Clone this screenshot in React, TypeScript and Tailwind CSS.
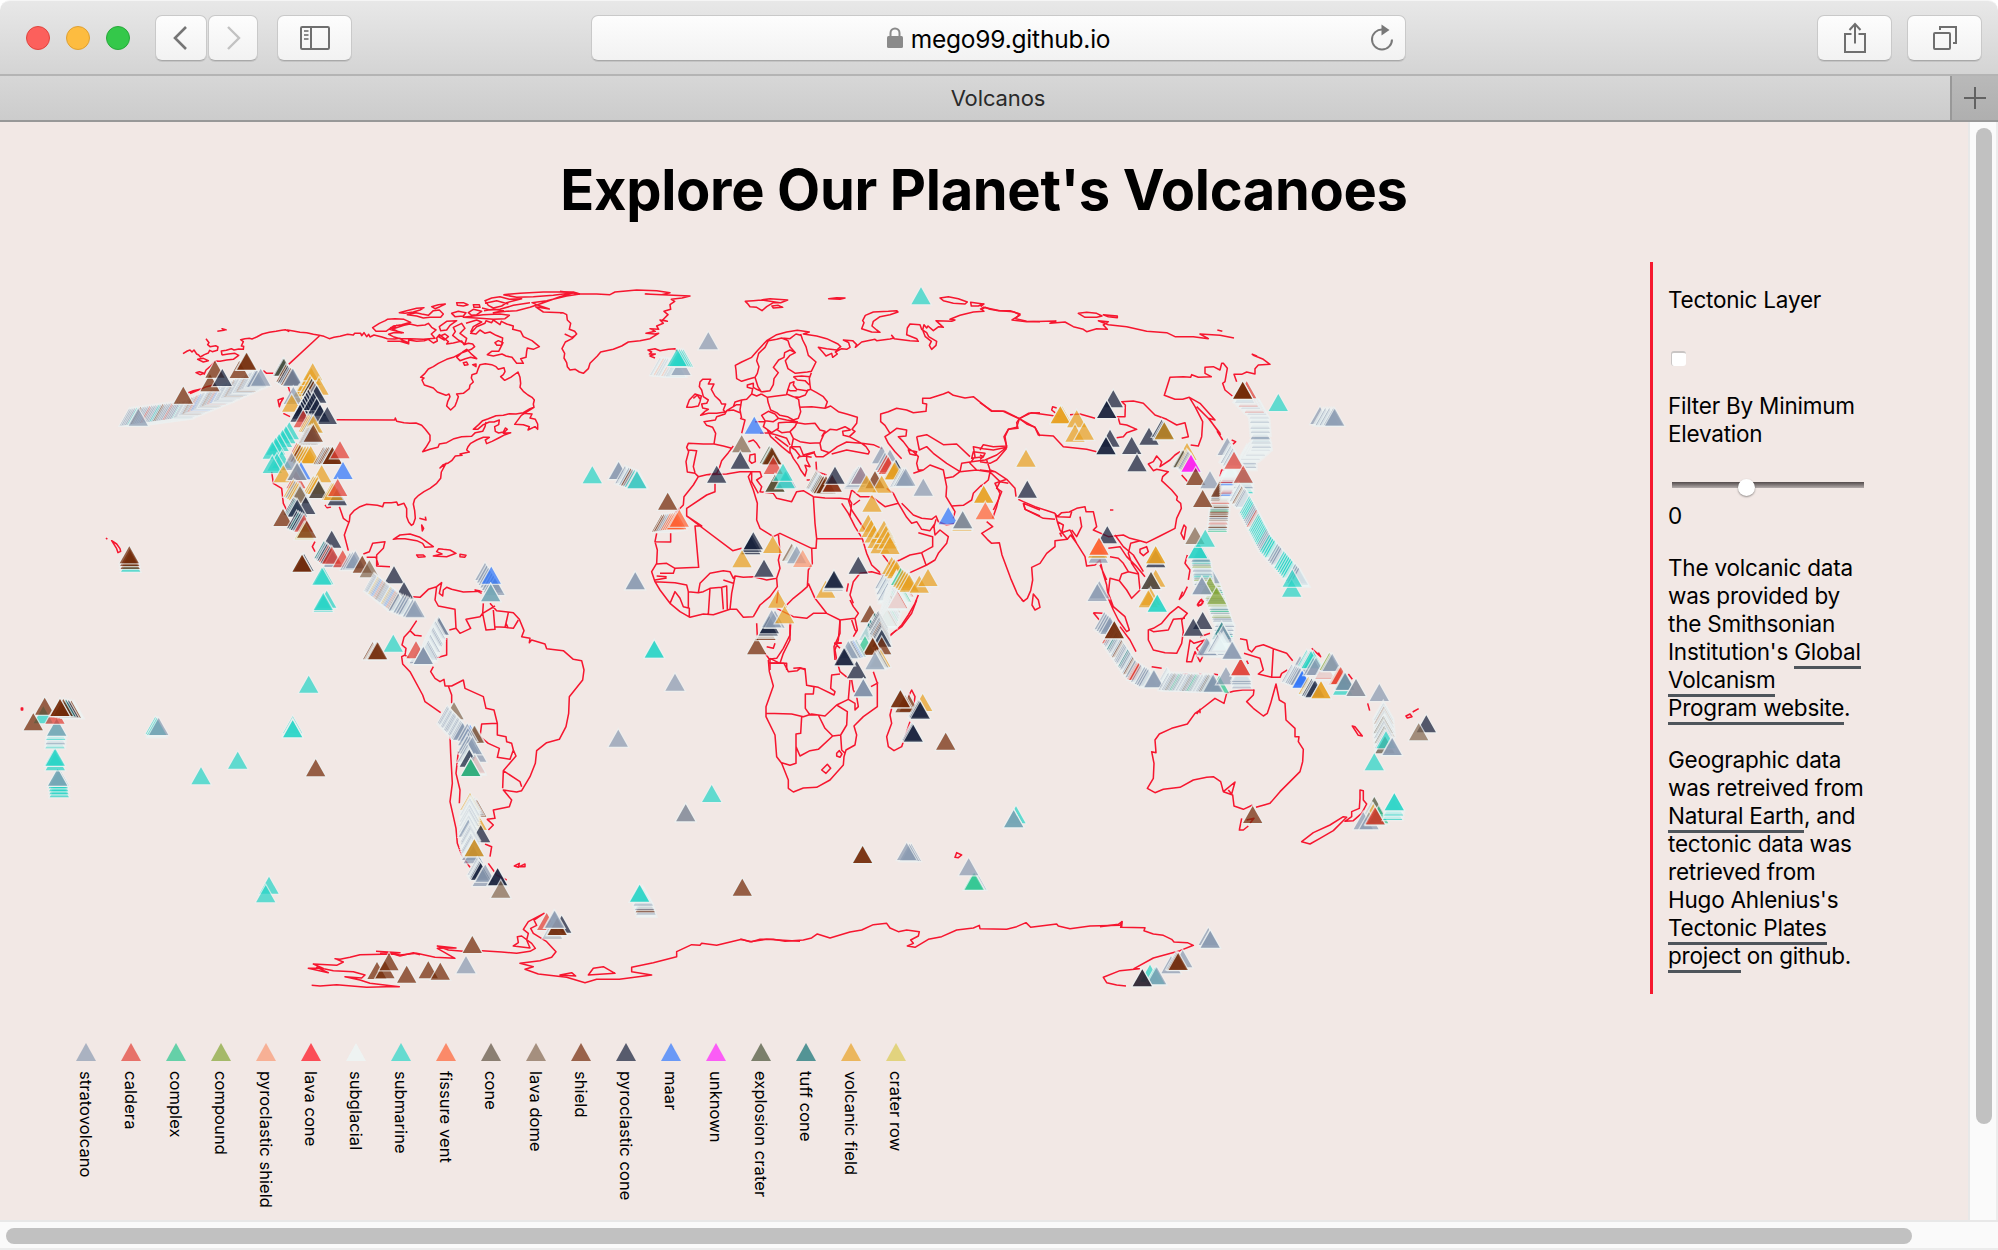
import React from 'react';

const KINDS: Record<string, { name: string; color: string }> = {
  s: { name: 'stratovolcano', color: '#8b9bb2' },
  c: { name: 'caldera', color: '#e23f35' },
  x: { name: 'complex', color: '#2ac68f' },
  d: { name: 'compound', color: '#84a535' },
  h: { name: 'pyroclastic shield', color: '#f99973' },
  l: { name: 'lava cone', color: '#ff0c1a' },
  g: { name: 'subglacial', color: '#ecf8f8' },
  u: { name: 'submarine', color: '#29d5c7' },
  f: { name: 'fissure vent', color: '#ff6335' },
  n: { name: 'cone', color: '#5f5241' },
  o: { name: 'lava dome', color: '#846952' },
  b: { name: 'shield', color: '#732a08' },
  p: { name: 'pyroclastic cone', color: '#16203b' },
  m: { name: 'maar', color: '#3077fd' },
  k: { name: 'unknown', color: '#ff21fd' },
  e: { name: 'explosion crater', color: '#495238' },
  t: { name: 'tuff cone', color: '#107074' },
  v: { name: 'volcanic field', color: '#e8a123' },
  r: { name: 'crater row', color: '#dbca53' },
};

/** [kinds, x, y] is one spot; [kinds, x1, y1, x2, y2, count] is a chain that cycles through the kinds. */
type Row = [string, number, number, number?, number?, number?];
type Region = { x: number; y: number; land: string; rows: Row[] };

const REGIONS: Region[] = [
  {
    // North America
    x: 100,
    y: 270,
    land: `M249 251L262 243 270 240 276 246 282 240 290 252 296 255 301 261 313 254 325 249 329 241 337 245 352 241 354 231 347 227 330 230 323 224 327 218 318 206
M366 255L364 243 379 241 394 236 402 240 416 237 430 238 431 229 424 228 430 215 422 209 435 206 448 205 456 207 470 201 487 192 508 187 528 184 545 181 556 179 566 184 562 180 580 183 600 187 620 188 640 193 658 196 672 199 688 206 702 202 720 199 743 193 760 195 764 190 782 190 785 197 792 188 800 200 806 193 810 201 822 195 846 201 862 206 884 207 900 205 905 210 926 218 926 210 950 214 973 212 985 208 1000 219 1012 213 1010 204 1018 194 1030 203 1045 215 1040 222 1060 219 1085 213 1092 224 1105 220 1118 222 1124 230 1114 238 1100 243 1082 250 1060 262 1040 268 1015 280 1000 290 985 297 975 310 962 322 972 324 966 330 973 345 1000 354 1012 366 1038 376 1047 372 1050 380 1043 395 1040 408 1052 420 1065 408 1070 395 1075 380 1070 372 1090 370 1108 356 1110 345 1120 336 1114 324 1116 314 1130 310 1135 295 1140 284 1156 281 1175 284 1188 290 1195 298 1212 293 1215 305 1210 314 1202 320 1214 331 1232 322 1254 306 1260 322 1262 340 1260 352 1270 364 1284 375 1296 382 1303 390 1300 402 1302 412 1290 416 1270 428 1248 432 1228 431 1210 436 1188 437 1165 446 1148 452 1136 464 1120 478 1133 478 1150 464 1168 456 1182 456 1198 450 1196 464 1184 470 1186 484 1196 489 1210 486 1216 474 1222 478 1210 490 1232 488 1215 494 1196 504 1176 514 1160 521 1156 510 1168 502 1150 502 1130 510 1112 520 1104 530 1100 540 1108 546 1080 552 1086 556 1066 558 1055 572 1043 580 1030 584 1020 594 1038 580 1024 606 1022 625 1010 640 990 655 972 665 956 676 944 688 940 702 944 722 946 745 940 762 934 766 926 756 920 740 920 716 912 700 894 706 890 696 874 698 852 698 848 710 832 706 800 703 780 710 762 722 750 736 748 754 740 775 733 795 738 815 745 842
M658 198L566 283M490 302L500 310 520 310M288 308L298 305 312 310 300 314ZM312 314L318 300 330 290 346 273 360 274 380 270 400 268 416 256 405 250 385 252 366 255M293 268L310 265 325 272 310 276ZM265 368L280 362 300 358 272 370 320 350 340 345M352 184L372 181 366 176 380 180
M710 449L884 450 886 444 890 454 912 458 930 460 948 459 965 466 976 478 990 496 990 512 978 532 968 545 990 538 1014 532 1018 522 1040 518 1062 506 1085 500 1115 499 1126 488 1148 484 1155 470 1158 456
M1302 412L1264 436 1244 463 1270 464 1288 470 1284 480 1305 470 1313 478 1313 462 1306 448 1290 444 1296 432 1270 430
M818 173L838 160 856 152 862 148 885 146 912 148 932 157 905 164 880 168 858 184 828 184Z
M868 178L890 166 880 176 912 166 930 162 952 167 975 165 985 160 995 172 1008 180 994 192 1005 205 970 208 930 206 900 206 880 200 866 193 880 188 910 188 885 182ZM870 172L905 190M862 214L900 214 928 222
M898 128L920 122 950 115 972 113 960 120 940 126 915 130ZM922 134L948 128 965 132 985 136 1000 122 1018 120 1030 132 1022 142 990 142 970 144 950 138ZM995 110L1015 104 1036 102 1020 110 1005 116ZM1070 98L1090 98 1104 104 1090 108 1072 106ZM1055 130L1075 124 1098 128 1090 138 1065 140ZM1105 128L1120 118 1145 124 1130 134 1115 136ZM1120 104L1138 104 1140 112 1122 112Z
M1090 142L1120 138 1150 134 1200 132 1228 136 1215 146 1180 148 1140 145Z
M1155 92L1175 84 1200 80 1228 88 1265 86 1220 98 1205 108 1180 114 1165 106ZM1155 100L1190 92 1225 102M1152 122L1180 118 1210 122 1180 128 1220 124 1250 122 1290 112 1330 98 1380 80 1420 68M1210 74L1260 70 1330 66 1420 66 1440 72M1210 74L1250 82 1300 80 1360 76 1420 68M1146 114L1170 120 1200 118 1240 106 1290 98
M1112 190L1130 170 1155 160 1158 152 1175 158 1180 150 1200 164 1204 154 1220 162 1240 168 1238 178 1262 184 1270 200 1296 212 1318 230 1300 238 1282 234 1280 244 1278 262 1262 266 1270 280 1250 280 1236 262 1218 258 1206 252 1180 258 1162 254 1175 244 1196 244 1205 226 1208 204 1188 196 1170 186 1155 190 1140 180 1128 192Z
M1070 262L1088 246 1100 238 1112 250 1130 266 1112 262 1096 266 1080 272ZM1090 278L1100 276 1104 284 1094 286ZM1118 284l10-2 0 8zM1185 218l10-6 14 6-4 8-14 0zM1018 170L1040 154 1070 152 1050 166 1040 180 1022 182ZM1060 172L1085 160 1095 175 1080 190 1100 205 1095 222 1075 210 1058 196 1066 185ZM1098 160L1130 150 1145 156 1120 170 1112 186M1015 200l20-8 10 8-12 10z
M1306 110L1348 117 1310 104 1296 98 1340 92 1400 78 1440 72M1306 110L1330 126 1388 128
M880 808L900 795 930 792 960 802 975 812 1000 830 975 832 968 820 950 812 915 806 892 806ZM1010 845L1016 836 1030 838 1050 840 1068 850 1040 860 1000 858 1026 852ZM950 855l20 0 5 5-20 2zM1080 853l18 3-4 6-14-2zM958 745l20 5-2-10M965 765l6 10-4 8zM790 852L808 845 818 820 855 815 850 835 830 855 830 888 870 890M800 862L828 862 835 885M515 605L520 640 545 655 550 700 560 720M645 815l-8 15 8 15M718 710L730 745 745 756M675 705l6 8 12-2M35 812l15 10 10 14 2 8-8 4-4-12zM18 804l4 4M534 390l16-6-8 14-4 12zM550 430l20 10M565 350l6 20`,
    rows: [
      ['ssssusbssssc', 88, 467, 250, 445, 30],
      ['ssgssbsscsm', 250, 443, 370, 395, 24],
      ['sssgssb', 370, 395, 470, 350, 20],
      ['s', 115, 467], ['b', 250, 401], ['b', 330, 364], ['b', 345, 323], ['p', 367, 348], ['b', 418, 324], ['b', 438, 299, 440, 299, 2], ['s', 482, 347],
      ['p', 549, 317], ['e', 552, 317], ['bpsb', 558, 335, 572, 345, 4], ['ps', 577, 347, 579, 347, 2],
      ['v', 598, 397, 634, 345, 4], ['v', 638, 331], ['v', 657, 374], ['vpbsp', 630, 370, 650, 398, 5], ['s', 580, 402], ['v', 575, 425], ['ppp', 625, 410, 600, 455, 6], ['p', 640, 420, 660, 455, 3],
      ['p', 682, 462], ['c', 610, 472], ['vvs', 625, 485, 640, 488, 4], ['sbs', 620, 525, 640, 515, 5], ['u', 568, 508, 517, 566, 6], ['u', 545, 595, 517, 609, 3],
      ['cvb', 590, 570, 600, 575, 3], ['v', 607, 580, 632, 580, 4], ['bsb', 670, 583, 697, 582, 6], ['b', 697, 582], ['c', 720, 565], ['s', 575, 600], ['v', 550, 637], ['m', 603, 628], ['c', 588, 655], ['os', 590, 630, 592, 630, 2],
      ['v', 665, 637], ['m', 729, 627], ['v', 640, 670, 652, 672, 3], ['pn', 655, 684, 656, 684, 2], ['v', 695, 690], ['p', 712, 706], ['v', 700, 690], ['c', 713, 678], ['vsv', 580, 680, 600, 694, 5], ['o', 600, 700],
      ['p', 617, 732], ['pts', 580, 735, 592, 740, 4], ['b', 549, 768], ['ptpsc', 590, 775, 612, 785, 5], ['r', 613, 808], ['b', 620, 803],
      ['p', 695, 833], ['tspcp', 672, 865, 690, 880, 5], ['s', 700, 891], ['c', 695, 881], ['c', 728, 892], ['s', 750, 900, 766, 895, 3], ['b', 787, 908], ['o', 808, 922], ['p', 612, 903], ['b', 607, 905, 606, 905, 2],
      ['u', 671, 943, 666, 944, 2], ['u', 680, 1013], ['u', 670, 1025], ['u', 670, 1020],
      ['p', 882, 940], ['p', 912, 988], ['sssgvssmsfsbs', 822, 962, 895, 1020, 26], ['sgss', 895, 1022, 945, 1042, 8],
      ['ubbb', 92, 905, 88, 880, 4], ['s', 1155, 930, 1185, 975, 7], ['m', 1174, 941], ['us', 1172, 994, 1172, 994, 2],
    ],
  },
  {
    // Greenland, Europe, northern Africa, Middle East
    x: 560,
    y: 270,
    land: `M0 64L60 72 110 72 150 74 165 66 230 60 290 62 330 68 305 74 256 72 340 76 390 78 366 84 334 88 344 94 330 104 332 118 312 124 324 134 308 150 322 154 300 150 310 160 290 168 296 178 270 176 286 184 258 190 284 192 296 190 270 206 240 212 205 216 185 228 160 238 122 246 112 258 90 280 85 296 70 310 58 306 46 298 30 300 22 290 20 278 12 264 14 250 6 236 16 216 36 206 50 192 44 184 28 178 32 160 22 150 20 134 8 128 0 128M14 192L36 202 46 196
M556 94L580 92 604 90 630 86 683 90 662 98 640 98 620 110 606 122 590 112 570 110 562 100ZM604 90L660 98M636 108L655 106 668 112 640 114ZM806 86L830 83 855 84 840 88Z
M905 176L912 158 908 152 916 136 940 126 985 124 1010 122 1014 126 990 134 960 140 940 154 936 168 950 180 960 187 935 186Z
M1140 84L1165 80 1195 86 1222 96 1215 102 1180 100 1150 92ZM1232 97L1270 102 1255 108 1234 108Z
M350 244L345 236 325 238 300 242 285 236 264 240 275 246 268 252 286 252 270 258 285 264
M604 366L594 350 585 322 564 328 545 334 530 326 528 300 526 286 545 276 575 262 594 240 620 212 650 194 680 186 712 181 748 186 730 192 745 194 770 198 800 206 834 222 842 230 830 240 800 236 775 232 788 246 798 258 815 250 818 262 832 252 826 246 845 236 860 238 870 232 866 218 850 210 878 212 890 224 886 232 905 216 945 208 950 212 990 207 1002 204 995 196 1002 206 1050 212 1075 214 1070 206 1040 194 1042 174 1050 162 1080 164 1085 178 1100 188 1106 200 1130 214 1128 226 1115 238 1108 226 1114 214 1096 200 1088 180 1092 164 1100 174 1104 168 1120 182 1136 170 1150 172 1128 152 1175 154 1185 150 1170 148 1200 136 1240 126 1272 124 1265 118 1275 112 1290 118 1315 122 1350 122 1380 132 1366 146 1400 154 1440 155
M604 366L630 362 640 344 642 326 655 308 640 292 656 270 672 262 674 248 690 240 706 248 690 256 676 272 684 296 706 310 742 306 754 304 768 276 745 256 738 230 728 210 722 192M706 248L690 230 684 212 665 204 650 208 625 212 615 232 596 250 590 272 597 290 592 310 585 322M665 204L690 206 708 192 722 196
M754 308L748 325 750 345 752 358 740 362 710 358 700 345 702 335 690 340 684 358 690 362 710 362M700 320L725 318 750 320M700 320L712 330 735 332 748 345M684 358L680 372 700 380 718 382 736 375 745 358
M604 372L622 382 650 378 680 374M700 380L716 388 718 405 722 425 715 445 700 450 682 440 660 436 650 428 632 420 624 396 622 382M718 412L755 410 795 415 802 395 790 380 770 368 752 358M604 372L590 378 575 372 578 356 562 352 562 345 580 340 580 352 590 358 600 362
M795 415L812 408 835 425 860 432 892 442 890 460 876 478 885 484 868 500 850 496 848 484 872 480M872 480L855 470 830 480 810 478 792 492 786 505 780 520 784 540 808 548 832 530 860 516 885 518 905 520M808 548L790 560 768 560 762 548 740 555 740 570 750 590 735 586 740 600 735 618 722 600 715 586 700 565 690 545 690 530
M815 552L860 540 925 552 928 545 918 530 905 520 940 524 966 536M868 500L905 520
M575 372L560 388 545 390 525 396 520 410 500 422 495 432 470 440 466 450 432 455 440 466 458 472 467 490 462 522 430 522 385 520 380 532 386 545 378 575 382 606 405 610 415 620 440 614 470 610 478 594 485 572 505 548 520 528M462 522L490 528 515 535M385 540L410 542 404 570 400 590 405 608
M545 390L540 420 545 445M500 422L520 420 540 428M520 410L530 404 545 404M540 445L555 450 550 470 545 490M605 436L625 424 645 432 655 445 640 455 615 452ZM585 455L615 455 610 470 635 488 655 475 655 458M655 445L680 450 712 455 705 470 690 485 665 488 650 478M655 458L690 456 712 458 735 462 765 460 780 480 795 484 785 500M690 485L700 505 720 515 750 520 780 518M700 505L695 530 720 530 730 555 765 545M600 490L635 488M690 530L706 540 720 558 712 566
M565 515L580 510 590 520 600 535M622 480L632 500 650 516 665 530 690 550M630 490L650 495 680 505 690 525M645 500L665 515 685 530M570 555L585 552 586 575 575 580 568 572ZM715 560L735 558 755 562
M420 336L428 328 452 328 445 342 462 342 454 358 465 378 480 392 485 402 497 402 490 420 496 426 470 430 445 430 422 436 435 424 445 418 428 414 425 402 440 400 445 390 430 380 425 360 418 350ZM380 412L388 390 405 372 424 378 420 395 415 408 395 412ZM400 385l12-10 8 12
M1025 566L1005 545 985 520 975 500 990 490 975 466 962 455 962 432 985 425 1010 415 1040 420 1060 428 1098 424 1100 402 1088 400 1088 385 1110 385 1150 372 1165 366 1180 376 1215 384 1240 380 1265 400 1295 424 1330 424 1355 436 1378 446 1405 430 1440 428M1378 446L1370 458 1374 475 1345 478 1335 500 1340 532 1300 540 1270 536 1240 530 1245 560 1230 580 1250 600M1378 446L1400 462 1425 472 1440 498
M990 490L1010 475 1040 480 1038 498 1015 500 1030 515 1045 535 1060 545 1075 560 1070 580 1075 600 1090 600 1110 585 1150 600 1155 625 1160 650 1158 680 1175 708M1045 540L1070 545 1066 556 1050 552Z
M1070 500L1100 494 1130 512 1150 524 1190 522 1230 560M1070 500L1078 540 1100 530 1120 550 1160 580 1200 605 1250 600 1290 606 1320 635 1345 640M1240 545L1275 550 1270 560 1235 565ZM1200 605L1205 580 1235 575 1275 570 1310 555 1340 532
M1155 625L1180 620 1200 605M1175 708L1210 706 1235 690 1240 670 1265 645M1290 606L1285 630 1262 650M1320 635L1310 655 1325 665 1315 690 1300 720M1390 700L1440 720M1390 700L1396 718 1440 738
M1025 700L1040 715 1060 735 1085 745 1115 748 1128 738 1135 755 1160 765 1185 760M1175 708L1185 725 1180 745M1128 748L1122 770 1125 795 1140 780 1165 800 1160 820 1135 850 1125 870 1100 885 1050 908 1015 925M1015 700L1040 742 1055 760 1070 755 1085 778 1110 782 1125 760M1075 788L1118 800 1118 830 1085 848 1050 855 1020 870 995 880M1085 848L1098 885M865 690L875 720 905 765 915 780M995 890L965 850
M845 700L865 730 885 770 907 806 920 850 935 885 960 908M905 806L770 806 768 835 755 835 757 880 745 900 742 950 725 965 700 985 680 1005M760 680L765 760 770 806M755 835L660 790 640 800 600 775 590 750 592 700 580 660 572 640 565 620 575 605M1075 975L1065 1000 1045 1035 1025 1065 990 1098
M415 620L400 645 372 680 370 705 345 730M440 614L500 612 540 605 600 605 605 620 590 630 605 650 600 665 640 670 650 685 695 695 710 665 730 662 760 680 795 684 840 685 868 688 875 660M575 605L575 635 595 670
M465 640L465 665 440 675 380 715 380 738 518 842 545 835M380 738L425 768 405 768 416 892 345 895 320 880 290 882M283 815L332 816 332 790M290 790L285 815 292 840 290 880 275 905 285 935 300 960 330 1000 360 1025 390 1042 430 1032 460 1034 510 1018 530 1018 550 1042 580 1040M590 1060L592 1100M615 1150L630 1170 630 1200
M285 935L345 938 380 945 385 965 415 968 420 940 450 910 490 902 510 905 520 925 525 918 550 922 580 920 620 930 650 925 660 895 655 870 660 850 655 790M345 895L340 910 300 910M290 918L320 920M285 930L320 924M330 1000L345 965 360 985 370 1010 388 1015 388 1042M385 965L385 1015M445 1032L450 955 485 952 490 1018M485 952L500 948 502 1018M510 1018L515 970 525 920M415 968L430 965 450 955M490 930L520 940M650 925L652 950 630 980 600 1005 580 1040M655 960L650 1000M650 1015L700 1040 740 1045 760 1030 800 1030 840 1050 885 1045M745 940L765 985 800 1030M680 1005L700 985M885 1045L892 1080 880 1100M840 1050L840 1090 822 1130 825 1170M822 1120L845 1120M865 940L860 965M870 990L880 1010 895 1030 885 1045M880 1000L870 975 880 935 900 910 935 905 970 915M690 1060L690 1110 670 1150 660 1180 630 1165M620 1130L640 1135 645 1120M630 1180L680 1180 680 1200M700 1195l20 -2 16 6
M868 688L875 700 870 740M875 660L900 680 935 680 975 710 1015 700 1000 670 980 655M900 690L880 705M768 575L770 605 800 615M740 630l10 0M1060 610L1090 600`,
    rows: [
      ['u', 1083, 103], ['s', 445, 238], ['sggfgsg', 300, 315, 350, 320, 16], ['s', 363, 315], ['uu', 370, 290, 351, 288, 4], ['u', 97, 640], ['s', 175, 627], ['s', 176, 627], ['sgsbsu', 195, 640, 235, 655, 8], ['su', 230, 655, 231, 655, 2],
      ['m', 583, 491], ['o', 545, 547], ['p', 541, 596], ['p', 470, 638], ['exb', 628, 580, 638, 584, 3], ['b', 635, 583], ['c', 640, 612], ['be', 645, 665, 645, 665, 2], ['s', 680, 653], ['u', 676, 655], ['u', 669, 632],
      ['osgsn', 768, 655, 785, 668, 6], ['b', 790, 670, 798, 670, 2], ['c', 815, 665], ['b', 817, 665], ['p', 825, 641], ['s', 882, 655, 896, 642, 4], ['cs', 902, 641, 902, 641, 2], ['s', 965, 580], ['s', 990, 590], ['scc', 975, 600, 985, 612, 3], ['p', 1008, 620], ['v', 998, 630, 1004, 628, 3], ['sgs', 1020, 650, 1037, 647, 4],
      ['b', 945, 655], ['v', 965, 668], ['v', 920, 667], ['s', 1090, 677], ['v', 936, 725], ['b', 323, 719], ['bbssffff', 305, 785, 350, 778, 8], ['f', 358, 770],
      ['v', 925, 785, 960, 850, 5], ['v', 972, 803, 990, 852, 4], ['sg', 975, 955, 985, 1000, 6], ['v', 995, 912, 1010, 925, 3], ['gsgsgxgsgbg', 1010, 955, 980, 1075, 34], ['gxgggcg', 1045, 955, 1010, 1020, 14], ['xvvvv', 1022, 945, 1048, 965, 5], ['v', 1078, 968], ['v', 1104, 948],
      ['p', 895, 911], ['v', 797, 983], ['pgpp', 820, 963, 822, 953, 4], ['p', 572, 853, 580, 838, 3], ['v', 638, 849], ['v', 546, 892], ['p', 612, 920], ['ogs', 695, 872, 710, 880, 3], ['h', 728, 891], ['s', 225, 958, 226, 958, 2],
      ['v', 653, 1013], ['b', 590, 1153], ['bgpp', 618, 1110, 628, 1090, 4], ['s', 645, 1073], ['s', 635, 1072], ['v', 674, 1060], ['u', 283, 1162], ['m', 1165, 763], ['v', 1206, 782], ['sn', 1206, 777, 1208, 775, 2], ['s', 1208, 775], ['v', 1271, 698, 1271, 698, 2], ['f', 1276, 748],
      ['b', 930, 1057], ['tgt', 945, 1080, 920, 1120, 5], ['ppgpsb', 955, 1075, 965, 1130, 10], ['x', 915, 1150], ['b', 965, 1153], ['b', 938, 1153, 938, 1155, 2], ['vsgs', 962, 1190, 945, 1198, 4], ['tgmspgsp', 888, 1160, 865, 1165, 7], ['p', 890, 1225], ['p', 855, 1186, 852, 1186, 2],
    ],
  },
  {
    // Asia
    x: 980,
    y: 270,
    land: `M20 755L38 770 5 790 22 808 35 820 58 818 66 855 92 925 112 972 130 994 142 985 152 962 158 930 155 892 180 880 200 850 225 830 225 812 262 808 272 795 290 820 315 860 320 888 345 885 360 870 368 905 380 945 385 985 400 1020 415 1050 440 1085 448 1080 435 1040 400 1010 385 970 390 925 418 932 440 960 455 985 480 960 475 910 455 880 445 850 452 820 480 812 500 818 540 798 585 775 590 745 604 715 602 700 590 690 592 680 575 660 545 632 548 620 565 605 530 598 520 602 505 582 520 575 530 558 545 575 540 590 570 570 585 555 600 545
M632 525L655 528 665 500 668 455 645 410 628 382 660 400 705 450 685 445 720 490 712 485 728 510M650 410L690 450 722 495M628 382L608 388 585 388 553 376 570 322 610 320 632 322 635 314 655 322 694 320 675 310 675 292 700 290 720 300 725 280 730 280 742 295 735 335 728 340 735 360 757 378
M762 204L720 196 660 192 685 206 640 200 585 200 560 188 500 184 440 170 385 164 355 152 385 155 370 165 382 178 350 176 320 185 310 178 280 170 255 156 210 160 228 153 140 155 96 150 120 135 100 125 60 122 10 112 0 118M0 105L12 102 2 110
M295 130L320 127 350 130 366 138 350 142 315 142ZM370 134L412 138 412 143 385 140ZM712 180l15 4M815 252L830 258 820 256 850 268 870 283 835 285 825 296 825 312 800 306 785 313 762 313 770 335
M0 398L35 422 75 424 118 446 155 428 210 436 240 440 215 420 218 410 230 414M270 434L300 432 345 445M118 446L165 472 175 495 220 498 250 530 320 538 350 545M400 440L435 440 436 405 425 395 460 393 490 400 525 435 560 448 590 465 615 458 625 500 605 505M415 445L420 462 440 465 470 478 440 488 430 500 410 503
M118 446L110 472 85 478 72 500 80 528 40 530 10 524 0 540M0 575L30 580 50 570 80 535M0 555L10 560 0 568M20 570L30 600 45 605M0 600L45 605 80 628 105 655 108 680M80 628L45 640 60 670 50 710 38 745
M115 688L130 695 165 710 225 730M130 700L135 718 190 745 225 748M225 730L232 740 245 728 268 726 290 715 315 710 318 725 340 725 350 770 340 780 385 800 430 795 450 805 480 812M225 730L232 755 240 780 262 808M232 740L270 742 275 725M245 800L240 790 270 780 290 820M300 740L305 770 290 800 275 780M232 755L250 765 245 790
M385 835L420 830 440 860 470 890 495 920M390 860L415 865 430 880 445 905 475 912M418 932L425 912 445 905M360 885L380 930M405 795L430 830 460 855 490 905
M480 838L500 830 505 845 490 857 480 848ZM603 790L612 765 618 772 612 808ZM160 972L175 990 180 1012 165 1020 156 1005Z
M622 855L615 880 630 900 625 930M622 950L610 975 598 988 608 965M655 1000L665 988 668 1000 655 1008ZM505 1080L520 1075 545 1060 570 1030 595 1010 622 1030 605 1050 610 1085 605 1120 590 1150 555 1148 520 1140 505 1110ZM507 1078L520 1085 565 1080 580 1048 615 1045M340 1028L368 1030M340 1028L358 1050M420 1070L450 1110 468 1145M620 1175L630 1110 642 1120 675 1110 650 1135 668 1160 660 1175 645 1145 635 1175ZM660 1100L690 1090M720 620L725 600 735 600M755 510l12 5-8 8M605 615l18 20M390 720l10 0`,
    rows: [
      ['p', 400, 412], ['p', 380, 444, 380, 444, 2], ['v', 246, 460], ['v', 241, 460, 241, 460, 2], ['v', 290, 472], ['v', 285, 515], ['v', 313, 509], ['p', 390, 530], ['p', 378, 553, 378, 553, 2], ['p', 455, 552], ['p', 507, 524], ['p', 545, 500, 550, 505, 2], ['pv', 553, 508, 553, 508, 2], ['p', 471, 604],
      ['v', 138, 590], ['p', 142, 683], ['v', 621, 570], ['en', 607, 592, 610, 592, 2], ['vsps', 620, 590, 630, 602, 5], ['k', 633, 605, 633, 605, 2], ['b', 647, 645], ['b', 727, 668], ['s', 690, 655],
      ['gs', 800, 600, 800, 577, 5], ['ggsgg', 805, 575, 845, 540, 14], ['gsg', 845, 538, 843, 515, 6], ['s', 841, 508], ['ggsggsg', 842, 497, 838, 445, 13], ['ggsgc', 838, 442, 790, 395, 14], ['c', 800, 385], ['b', 788, 386, 788, 386, 3], ['u', 895, 423],
      ['s', 1020, 462], ['gs', 1030, 466, 1060, 466, 6], ['s', 1064, 467], ['xsbgcgosbob', 712, 785, 722, 680, 20], ['b', 668, 711], ['ggmcg', 752, 690, 750, 620, 12], ['ugsg', 790, 670, 790, 640, 5],
      ['gsgbgss', 775, 690, 800, 715, 8], ['uuuussscguuuu', 808, 730, 865, 840, 20], ['uuuugsssguu', 868, 845, 960, 950, 20], ['u', 935, 980], ['u', 937, 950], ['s', 742, 555], ['gs', 748, 575, 762, 590, 5], ['c', 762, 596], ['c', 790, 638],
      ['gsusgsgs', 720, 1160, 735, 1065, 17], ['gssdgsxsgd', 730, 1060, 690, 940, 22], ['sgdsusg', 672, 945, 663, 875, 13], ['u', 653, 865, 653, 865, 2], ['o', 645, 822], ['u', 676, 830], ['d', 690, 973], ['s', 665, 973, 666, 973, 2], ['d', 710, 1003],
      ['p', 668, 1077], ['p', 640, 1097], ['t', 725, 1108], ['gs', 725, 1130, 730, 1118, 2], ['s', 684, 1158],
      ['p', 382, 820], ['s', 355, 878], ['v', 353, 863], ['f', 357, 854, 357, 854, 2], ['p', 527, 892], ['v', 527, 880, 527, 880, 2], ['v', 527, 950], ['pn', 513, 957, 513, 957, 2], ['v', 512, 1005, 505, 1012, 2], ['u', 532, 1025, 532, 1025, 2], ['s', 358, 985, 352, 993, 2],
      ['s', 373, 1078, 390, 1092, 4],
    ],
  },
  {
    // Pacific and Marie Byrd Land
    x: 0,
    y: 580,
    land: `M1260 1124L1240 1118 1200 1128 1180 1122 1080 1124 1050 1132 1020 1138 1005 1136 1030 1146 1010 1156 940 1152 970 1165 925 1165 985 1178 950 1162 1000 1172 1060 1175 1095 1185 1085 1194 1035 1190 1080 1200 1110 1210 1198 1220 1160 1220 1100 1222 1010 1214 960 1218 935 1216M1128 1114L1200 1118 1165 1122M64 384l4 0 0 6-4 0z`,
    rows: [
      ['u', 130, 430], ['b', 134, 404], ['b', 100, 451], ['uuu', 178, 652, 175, 625, 4], ['s', 178, 617], ['us', 173, 617, 173, 617, 2], ['u', 166, 571], ['u', 163, 557, 166, 557, 2], ['ugsg', 165, 505, 168, 474, 6], ['us', 170, 467, 170, 467, 2], ['c', 165, 431],
      ['gbptb', 222, 415, 190, 408, 5], ['b', 180, 408, 180, 408, 2], ['ug', 466, 462, 470, 472, 2], ['su', 472, 465, 470, 465, 2], ['s', 476, 465], ['ug', 878, 460, 878, 468, 2], ['u', 878, 472, 878, 472, 2], ['u', 713, 566], ['u', 603, 613], ['b', 947, 589], ['u', 926, 338],
      ['u', 1180, 215], ['bgb', 1118, 238, 1130, 238, 3], ['b', 1133, 238], ['u', 807, 941], ['u', 797, 967], ['b', 1131, 1197], ['b', 1155, 1195], ['b', 1167, 1171],
    ],
  },
  {
    // South America and the Antarctic Peninsula
    x: 380,
    y: 580,
    land: `M110 122L90 152 72 172 66 195 78 205 75 225 65 230 68 252 90 275 128 345 135 365 182 398M75 225L90 235M90 152L105 166 125 168M210 468L212 520 217 610 210 665 218 700 228 745 232 790 245 825 270 862M235 515L228 580 240 630 238 670
M98 50L120 52 145 28 170 20 185 8 178 40 188 48 190 30 200 22 215 28 250 36 305 34 285 30 305 40M310 70L308 100 345 78M330 70L350 92 400 98 418 118 432 152 425 170 450 175 448 188 455 180 495 192 500 206 550 212 580 238 605 242 612 270 608 300 568 350 566 400 558 440 538 478 500 488 470 512 466 550 450 590 425 632 410 636 370 630 395 660 388 680 340 690 345 715 322 718 340 735 325 750M315 792L335 800 330 830M325 850L350 885 380 900
M170 20L165 60 175 78 225 88 228 145 208 150M228 145L240 160 272 145 258 118 300 110 308 100 318 150 345 148 340 90M345 140L375 142 385 98 378 130 385 145M375 142L400 145 415 120M200 175L200 225 165 235M160 260L152 275 165 295 180 305 192 298 195 318 215 318 250 300 255 325 310 350 318 385 342 390 352 430 305 432 300 470 325 490 358 505 352 532 390 538 400 510 395 490 380 485 378 470 352 465 352 430M400 510L408 528 370 572 368 625M370 572L420 605 425 620M205 318L215 345 215 370
M403 858L418 850 415 862ZM418 860L435 852 435 860Z
M0 1120L20 1118 60 1125 110 1120 165 1132 225 1135 172 1105 228 1104 172 1098 205 1110 250 1114M305 1112L365 1116 410 1120 450 1114 466 1105 455 1090 425 1068 412 1070 415 1088 400 1098 450 1104 440 1080 445 1060 430 1048 445 1025 492 1000 462 1020 470 1036 452 1045 460 1060 500 1085 528 1115 515 1132 480 1142 420 1150 460 1160 435 1168 475 1182 560 1192 615 1208 650 1198 718 1198 815 1185 755 1175 755 1162 820 1148 890 1130 890 1115 935 1094 960 1096 965 1090 1010 1096 1085 1078 1110 1085 1160 1078 1260 1084M625 1185L640 1165 670 1160 705 1180ZM540 1185L575 1178 587 1188Z`,
    rows: [
      ['sgc', 118, 250, 108, 235, 3], ['p', 176, 163], ['s', 178, 165], ['gsggssg', 168, 170, 140, 245, 14], ['p', 130, 252], ['s', 130, 252, 130, 252, 2], ['o', 222, 418], ['ssgssgs', 202, 430, 248, 480, 16], ['m', 270, 485], ['b', 285, 488], ['o', 283, 488], ['s', 262, 482, 265, 510, 3], ['s', 290, 545], ['s', 262, 520, 277, 523, 3],
      ['sgp', 262, 545, 268, 560, 3], ['pcg', 285, 575, 288, 584, 3], ['xe', 272, 588, 272, 588, 2], ['x', 272, 588], ['b', 290, 710], ['s', 282, 705], ['vg', 270, 690, 275, 700, 2], ['v', 292, 750], ['gsggs', 270, 700, 265, 770, 12], ['p', 302, 787], ['gssg', 270, 780, 275, 840, 10], ['s', 280, 850], ['nv', 283, 829, 283, 829, 2], ['sgspp', 292, 885, 302, 900, 5], ['s', 307, 918], ['s', 316, 905], ['p', 352, 916, 353, 916, 2], ['o', 362, 953],
      ['u', 823, 233], ['s', 885, 332], ['s', 715, 500], ['u', 995, 666], ['os', 917, 724, 917, 724, 2], ['b', 1087, 947], ['gsbsgsg', 800, 1010, 788, 970, 7], ['u', 778, 965, 779, 965, 2], ['c', 500, 1050], ['p', 545, 1058], ['pg', 517, 1075, 520, 1070, 2], ['b', 530, 1065, 532, 1065, 2], ['s', 522, 1043, 524, 1043, 2],
      ['b', 277, 1119], ['s', 258, 1180], ['b', 80, 1208], ['b', 145, 1195], ['b', 181, 1199],
    ],
  },
  {
    // Southern Africa and the Indian Ocean
    x: 740,
    y: 600,
    land: `M85 180L88 215 100 258 78 320 78 350 105 405 110 470 125 490 145 540 145 565 160 576 190 564 230 562 270 540 310 495 312 470 318 450 345 435 350 405 342 378 370 350 412 320 412 250 400 215
M85 188L132 190 145 215 172 212 180 205 195 206 200 256 235 262 282 285 285 275 272 265 275 225 300 222M200 256L222 260 220 282 196 282 196 325 210 345 235 345M78 340L155 342 190 350 215 342 235 345M185 350L182 400 168 402 168 490 150 496 125 488M168 440L180 468 210 452 235 448 278 408 302 405 320 375 322 335 290 315 255 348 235 345 255 385 278 408M302 405L305 450 315 460M290 460l8-8 8 10-6 10-10-4zM245 510L262 493 272 505 258 520ZM290 315L325 298 330 240M325 298L345 310 345 330 355 320 350 290 340 270 335 240M415 248l-22 12
M300 60L295 120 285 150 290 180 300 215 325 235M335 60L345 90 350 95M305 128L285 130 300 145M530 0L515 40 485 80 450 105M152 70L150 105 130 145 110 175 85 178
M455 325L450 345 455 370 440 410 445 440 462 452 485 440 510 365M505 290L515 270 525 290 522 310M645 772L650 758 665 765 655 773ZM845 0l8 4
M0 1018L35 1025 60 1018 100 1018 135 1024 190 1020 215 1014 232 1002 270 1014 330 996 365 990 400 974 440 970 450 984 475 995 500 990 538 995 535 1008 512 1020 520 1030 502 1038 525 1042 565 1018 605 1010 650 990 700 984 718 976 720 986 800 988 830 980 858 968 872 982 950 972 955 978 990 986 1050 978 1140 976 1146 965 1145 984`,
    rows: [
      ['ps', 370, 289, 370, 289, 2], ['s', 370, 289], ['b', 507, 335], ['b', 495, 337], ['b', 482, 322, 481, 322, 2], ['v', 548, 333], ['spp', 535, 350, 541, 356, 3], ['spp', 515, 420, 520, 425, 3], ['b', 617, 449], ['u', 828, 670], ['su', 821, 682, 821, 682, 2], ['s', 821, 682], ['b', 367, 789, 368, 789, 2],
      ['s', 514, 783, 508, 783, 2], ['s', 500, 780], ['sg', 710, 869, 705, 869, 2], ['x', 700, 869], ['x', 703, 869], ['s', 686, 826],
    ],
  },
  {
    // Indonesia, Australia and Oceania
    x: 1100,
    y: 590,
    land: `M420 146L440 150 445 178 455 186 468 170 490 164 520 176 560 190 578 212M520 176L515 262 540 262 545 250 562 240M432 190L480 205 490 240 475 252 515 262
M380 310L400 304 428 300 462 300 460 315 440 335 460 355 490 378 502 370 512 340 528 282 538 330 555 340 558 390 585 415 585 440 597 440 595 455 610 478 608 515 600 545 570 575 540 605 510 640 495 644 468 652M458 645L430 658 402 648 398 615 370 605 362 575 340 560 320 562 280 570 240 592 190 598 165 608 142 595 160 565 162 520 155 485 168 488 165 450 178 432 215 415 262 402 285 370 300 360 345 325 372 340 380 310M370 605L405 576 395 612 385 600M290 372l10-14 0 12
M418 720L425 685M440 690L462 685 450 700M445 708L430 720 416 720
M780 600L790 602 790 630 800 642 785 670 760 692 735 694 755 680 755 665 778 655 780 625ZM740 682L700 722 660 745 630 762 605 755 640 728 690 705 730 680ZM757 408L765 410 787 438 775 436ZM635 175L662 200 655 188M918 378L930 372 936 380 922 384ZM938 366l18-10M803 340l6 22M745 252l12 16M440 212l5 10M292 45l10-15 8 4-8 12z
M0 1010L55 1003 66 995 62 1012 135 1013 132 1022 160 1032 190 1036 215 1048 222 1056 262 1058 280 1066 240 1082 160 1104 102 1136 118 1136 60 1142 10 1162 20 1178 50 1185 78 1188M155 230L185 235M250 252l14 0M298 250l6 4M340 252l14 2`,
    rows: [
      ['c', 35, 160], ['ssgtssgsbgs', 40, 165, 105, 262, 22], ['c', 110, 268, 116, 270, 3], ['sgss', 122, 275, 150, 292, 6], ['sgg', 200, 285, 205, 290, 3], ['s', 160, 292, 162, 292, 2], ['sgssnssxssg', 205, 300, 330, 305, 28], ['x', 358, 308], ['tss', 335, 305, 340, 305, 3], ['s', 378, 283], ['sgs', 425, 295, 424, 270, 5], ['c', 422, 256, 422, 256, 2], ['b', 43, 145, 43, 145, 2],
      ['s', 320, 195], ['gsg', 345, 188, 370, 180, 4], ['s', 398, 206, 396, 206, 2],
      ['s', 600, 250], ['ugsx', 620, 232, 640, 235, 5], ['u', 633, 235], ['sgsss', 575, 275, 600, 285, 6], ['m', 605, 293, 607, 293, 2], ['s', 640, 255, 648, 255, 2], ['vgpsp', 625, 312, 645, 322, 5], ['v', 663, 325, 663, 325, 2],
      ['gcg', 670, 270, 680, 262, 3], ['d', 688, 240], ['s', 693, 243, 697, 243, 2], ['cf', 715, 285, 722, 282, 3], ['u', 728, 314], ['sts', 733, 298, 736, 300, 3], ['os', 768, 318, 768, 318, 2], ['s', 838, 333],
      ['gsgbgsg', 850, 385, 855, 440, 11], ['ngsg', 850, 430, 855, 490, 9], ['u', 858, 475], ['s', 875, 495, 877, 495, 2], ['u', 823, 541], ['p', 979, 427], ['o', 956, 451],
      ['e', 823, 672], ['sgv', 815, 690, 820, 693, 3], ['s', 790, 718], ['s', 807, 718], ['x', 836, 700], ['b', 827, 705], ['c', 825, 703], ['ug', 878, 690, 882, 670, 4], ['u', 883, 661, 883, 661, 2],
      ['b', 458, 699], ['s', 325, 1065], ['s', 330, 1073, 331, 1073, 2], ['s', 248, 1132], ['s', 213, 1150], ['sbb', 228, 1138, 235, 1140, 3], ['u', 150, 1175], ['su', 168, 1183, 166, 1183, 2], ['s', 170, 1183], ['bp', 127, 1189, 127, 1189, 2],
    ],
  },
];

function Chain({ row, ox, oy }: { row: Row; ox: number; oy: number }) {
  const [kinds, x1, y1, x2 = x1, y2 = y1, count = 1] = row;
  return (
    <>
      {Array.from({ length: count }, (_, i) => {
        const t = count > 1 ? i / (count - 1) : 0;
        const x = ox + (x1 + (x2 - x1) * t) / 3;
        const y = oy + (y1 + (y2 - y1) * t) / 3;
        return (
          <path
            key={i}
            d={`M${x.toFixed(1)} ${(y - 17).toFixed(1)}l9.6 17h-19.2z`}
            fill={KINDS[kinds[i % kinds.length]].color}
            stroke="#edf1f1"
            strokeWidth="2.4"
            paintOrder="stroke"
            opacity="0.72"
          />
        );
      })}
    </>
  );
}

function WorldMap() {
  return (
    <svg className="block h-[748px] w-[1640px]" viewBox="0 262 1640 748">
      <g fill="none" stroke="#f6162f" strokeWidth="4.6" strokeLinejoin="round">
        {REGIONS.map((r, i) => (
          <path key={i} d={r.land} transform={`translate(${r.x} ${r.y}) scale(0.33333)`} />
        ))}
      </g>
      {REGIONS.map((r, i) => (
        <g key={i}>
          {r.rows.map((row, j) => (
            <Chain key={j} row={row} ox={r.x} oy={r.y} />
          ))}
        </g>
      ))}
    </svg>
  );
}

const BUTTON =
  'flex h-[46px] items-center justify-center rounded-[7px] border border-[#c9c9c9] border-b-[#a9a9a9] bg-gradient-to-b from-[#fdfdfd] to-[#f2f2f2] shadow-[0_1px_0_#c4c4c4]';

function Toolbar() {
  return (
    <div className="flex h-[76px] items-start rounded-t-[10px] border-t border-b-2 border-t-[#f5f5f5] border-b-[#b4b4b4] bg-gradient-to-b from-[#e8e8e8] to-[#d4d4d4] pt-[14px] pl-[26px]">
      <div className="flex h-[46px] w-[129px] items-center gap-4">
        <span className="size-6 rounded-full border border-[#e0443e] bg-[#fc605c]" />
        <span className="size-6 rounded-full border border-[#dfa032] bg-[#fdbc40]" />
        <span className="size-6 rounded-full border border-[#27a83a] bg-[#34c84a]" />
      </div>
      <div className={`${BUTTON} w-[52px]`}>
        <svg className="h-6 w-4" viewBox="0 0 16 24" fill="none" stroke="#757575" strokeWidth="2.6">
          <path d="M13 1L2 12l11 11" />
        </svg>
      </div>
      <div className={`${BUTTON} ml-px w-[50px]`}>
        <svg className="h-6 w-4" viewBox="0 0 16 24" fill="none" stroke="#c2c2c2" strokeWidth="2.4">
          <path d="M3 1l11 11L3 23" />
        </svg>
      </div>
      <div className={`${BUTTON} ml-[19px] w-[75px]`}>
        <svg className="h-6 w-[30px]" viewBox="0 0 30 24" fill="none" stroke="#6f6f6f" strokeWidth="2">
          <rect x="1" y="1" width="28" height="22" rx="1.2" />
          <path d="M11 1v22" />
          <path d="M4 5h4.500M4 9h4.500M4 13h4.500" stroke="#8c8c8c" />
        </svg>
      </div>
      <div className={`${BUTTON} relative ml-[239px] w-[815px] gap-2 pt-[2px] font-['Inter'] text-[24.5px] tracking-[-0.2px] text-black`}>
        <svg className="-mt-[2px] h-[22px] w-4" viewBox="0 0 16 22">
          <rect y="9" width="16" height="12" rx="1.5" fill="#8a8a8a" />
          <path d="M3.500 10V6a4.500 4.500 0 0 1 9 0v4" fill="none" stroke="#8a8a8a" strokeWidth="2" />
        </svg>
        <span>mego99.github.io</span>
        <svg className="absolute top-[8px] right-[11px] h-7 w-6" viewBox="0 0 24 28" fill="none" stroke="#787878" strokeWidth="2">
          <path d="M12.500 5.500A10 10 0 1 0 22 15.500" />
          <path d="M11.500 .5v11l8-5.500z" fill="#787878" stroke="none" />
        </svg>
      </div>
      <div className={`${BUTTON} ml-[411px] w-[75px]`}>
        <svg className="h-[32px] w-6" viewBox="0 0 24 32" fill="none" stroke="#6f6f6f" strokeWidth="2">
          <path d="M8.500 12H2v18h20V12h-6.500M12 21.500V2M6.500 8L12 2l5.500 6" />
        </svg>
      </div>
      <div className={`${BUTTON} ml-[15px] w-[75px]`}>
        <svg className="h-6 w-6" viewBox="0 0 24 24" fill="none" stroke="#6f6f6f" strokeWidth="2">
          <rect x="1" y="7" width="16" height="16" rx="1" />
          <path d="M7 4V1h16v16h-3" />
        </svg>
      </div>
    </div>
  );
}

function TabBar() {
  return (
    <div className="flex h-[46px] border-b-2 border-[#989898]">
      <div className="w-[1950px] bg-gradient-to-b from-[#d7d7d7] to-[#cccccc] pl-[46px] text-center font-['Inter'] text-[22px] leading-[44px] tracking-[-0.1px] text-[#2a2a2a]">
        Volcanos
      </div>
      <div className="flex flex-1 items-center justify-center border-l-2 border-[#989898] bg-gradient-to-b from-[#b9b9b9] to-[#afafaf]">
        <svg className="size-[22px]" viewBox="0 0 22 22" stroke="#626262" strokeWidth="2">
          <path d="M11 0v22M0 11h22" />
        </svg>
      </div>
    </div>
  );
}

function Line({ children }: { children: React.ReactNode }) {
  return <span className="block h-7 whitespace-nowrap">{children}</span>;
}

function Source({ children }: { children: React.ReactNode }) {
  return (
    <a href="#" className="inline-block h-[31px] border-b-3 border-[#4f555b] leading-7">
      {children}
    </a>
  );
}

function Sidebar() {
  return (
    <aside className="ml-[10px] h-[732px] w-[260px] border-l-3 border-[#f6192f] pt-6 pl-[15px] font-['Inter'] text-[22.5px] leading-7 tracking-[-0.22px] text-black">
      <p>Tectonic Layer</p>
      <div className="mt-[37px] ml-[3px] size-[15px] rounded-[3px] border-t-2 border-l border-[#c9c5c4] bg-white" />
      <p className="mt-[26px]">
        <Line>Filter By Minimum</Line>
        <Line>Elevation</Line>
      </p>
      <div className="mt-[34px] ml-[4px] flex h-[6px] w-[192px] items-center bg-gradient-to-b from-[#544c4c] to-[#b5adac]">
        <span className="mt-[4px] ml-[66px] size-[17px] rounded-full bg-white shadow-[0_1px_2px_#0006]" />
      </div>
      <p className="mt-[14px]">0</p>
      <p className="mt-6">
        <Line>The volcanic data</Line>
        <Line>was provided by</Line>
        <Line>the Smithsonian</Line>
        <Line>Institution&apos;s <Source>Global</Source></Line>
        <Line><Source>Volcanism</Source></Line>
        <Line><Source>Program website</Source>.</Line>
      </p>
      <p className="mt-6">
        <Line>Geographic data</Line>
        <Line>was retreived from</Line>
        <Line><Source>Natural Earth</Source>, and</Line>
        <Line>tectonic data was</Line>
        <Line>retrieved from</Line>
        <Line>Hugo Ahlenius&apos;s</Line>
        <Line><Source>Tectonic Plates</Source></Line>
        <Line><Source>project</Source> on github.</Line>
      </p>
    </aside>
  );
}

function Legend() {
  return (
    <div className="mt-[33px] ml-[63px] flex">
      {Object.values(KINDS).map((k) => (
        <div key={k.name} className="flex w-[45px] flex-col items-center">
          <svg className="h-[18px] w-5" viewBox="0 0 20 18">
            <path d="M10 0L20 18H0Z" fill={k.color} opacity="0.7" />
          </svg>
          <span className="mt-[10px] font-['Inter'] text-[16.5px] leading-5 tracking-[0.06px] whitespace-nowrap text-black [writing-mode:vertical-rl]">
            {k.name}
          </span>
        </div>
      ))}
    </div>
  );
}

export default function App() {
  return (
    <div className="flex h-[1250px] w-[1998px] flex-col overflow-hidden bg-white">
      <Toolbar />
      <TabBar />
      <div className="flex h-[1098px]">
        <main className="w-[1968px] overflow-hidden bg-[#f2e8e5]">
          <h1 className="mt-[29px] h-[111px] text-center font-['Inter'] text-[56px] leading-[78px] font-bold tracking-[-0.33px] whitespace-nowrap text-black">
            Explore Our Planet&apos;s Volcanoes
          </h1>
          <div className="flex h-[748px]">
            <WorldMap />
            <Sidebar />
          </div>
          <Legend />
        </main>
        <div className="w-[30px] border-r-2 border-l-2 border-r-[#ececec] border-l-[#e8e8e8] bg-[#fafafa] pt-[6px] pl-[6px]">
          <div className="h-[996px] w-4 rounded-full bg-[#c1c1c1]" />
        </div>
      </div>
      <div className="h-[30px] border-t-2 border-b-2 border-t-[#e8e8e8] border-b-[#ececec] bg-[#fafafa] pt-[6px] pl-[6px]">
        <div className="h-4 w-[1906px] rounded-full bg-[#c1c1c1]" />
      </div>
    </div>
  );
}
